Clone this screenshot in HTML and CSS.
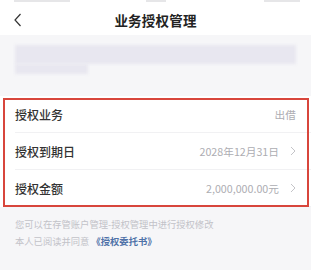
FILE: index.html
```html
<!DOCTYPE html>
<html lang="zh-CN">
<head>
    <meta charset="UTF-8">
    <meta name="viewport" content="width=device-width, initial-scale=1.0">
    <title>业务授权管理</title>
    <link rel="stylesheet" href="styles.css">
</head>
<body>
    <div class="status-bar">
        <span class="sb-time"></span>
        <span class="sb-mid"></span>
        <span class="sb-right"></span>
    </div>

    <div class="nav-bar">
        <svg class="nav-back" width="10" height="14" viewBox="0 0 10 14">
            <path d="M7.5 1 L2 7 L7.5 13" fill="none" stroke="#333" stroke-width="1.2"/>
        </svg>
        <h1 class="nav-title">业务授权管理</h1>
    </div>

    <div class="account-card">
        <div class="blur-line blur-long"></div>
        <div class="blur-line blur-short"></div>
    </div>

    <div class="auth-list">
        <div class="auth-row">
            <span class="auth-label">授权业务</span>
            <span class="auth-value">出借</span>
        </div>
        <div class="auth-row">
            <span class="auth-label">授权到期日</span>
            <span class="auth-value">2028年12月31日</span>
            <svg class="arrow" width="6" height="10" viewBox="0 0 6 10">
                <path d="M1 1 L5 5 L1 9" fill="none" stroke="#c4c4c8" stroke-width="1"/>
            </svg>
        </div>
        <div class="auth-row">
            <span class="auth-label">授权金额</span>
            <span class="auth-value">2,000,000.00元</span>
            <svg class="arrow" width="6" height="10" viewBox="0 0 6 10">
                <path d="M1 1 L5 5 L1 9" fill="none" stroke="#c4c4c8" stroke-width="1"/>
            </svg>
        </div>
        <div class="highlight-frame"></div>
    </div>

    <div class="notes">
        <p>您可以在存管账户管理-授权管理中进行授权修改</p>
        <p>本人已阅读并同意 <a href="#" class="doc-link">《授权委托书》</a></p>
    </div>
</body>
</html>
```

FILE: styles.css
```css
* {
    margin: 0;
    padding: 0;
    box-sizing: border-box;
}

body {
    font-family: "Noto Sans CJK SC", "Noto Sans", sans-serif;
    background: #f6f6f8;
    width: 311px;
    height: 270px;
    overflow: hidden;
}

.status-bar {
    height: 4px;
    background: #fff;
    position: relative;
}

.status-bar span {
    position: absolute;
    top: 0;
    height: 2px;
    background: #e6e6e8;
    filter: blur(0.6px);
}

.sb-time { left: 14px; width: 56px; }
.sb-mid { left: 146px; width: 20px; }
.sb-right { left: 264px; width: 36px; }

.nav-bar {
    height: 31px;
    background: #fff;
    display: flex;
    align-items: center;
    justify-content: center;
    position: relative;
}

.nav-back {
    position: absolute;
    left: 13px;
    top: 9px;
}

.nav-title {
    font-size: 13.5px;
    font-weight: 600;
    color: #222;
    letter-spacing: 0.2px;
    margin-top: 1px;
}

.account-card {
    height: 61px;
    padding: 10px 15px 0;
}

.blur-line {
    background: #e8e7f0;
    filter: blur(1.5px);
}

.blur-long {
    height: 19px;
    width: 281px;
}

.blur-short {
    height: 10px;
    width: 73px;
}

.auth-list {
    background: #fff;
    position: relative;
}

.auth-row {
    height: 37px;
    margin-left: 15px;
    padding-right: 15px;
    display: flex;
    align-items: center;
    border-bottom: 1px solid #f1f1f3;
}

.auth-row:last-of-type {
    height: 35px;
    border-bottom: none;
}

.auth-label {
    font-size: 12px;
    font-weight: 500;
    color: #333;
    flex: 1;
}

.auth-value {
    font-size: 10.7px;
    color: #adadb2;
}

.arrow {
    margin-left: 11px;
}

.highlight-frame {
    position: absolute;
    left: 3px;
    right: 2px;
    top: 2px;
    bottom: 0;
    border: 2px solid #d8463c;
    pointer-events: none;
}

.notes {
    padding: 9px 15px 0;
}

.notes p {
    font-size: 9.3px;
    color: #c2c2c8;
    line-height: 17px;
}

.doc-link {
    color: #4f72a8;
    font-weight: 600;
    text-decoration: none;
}
```
